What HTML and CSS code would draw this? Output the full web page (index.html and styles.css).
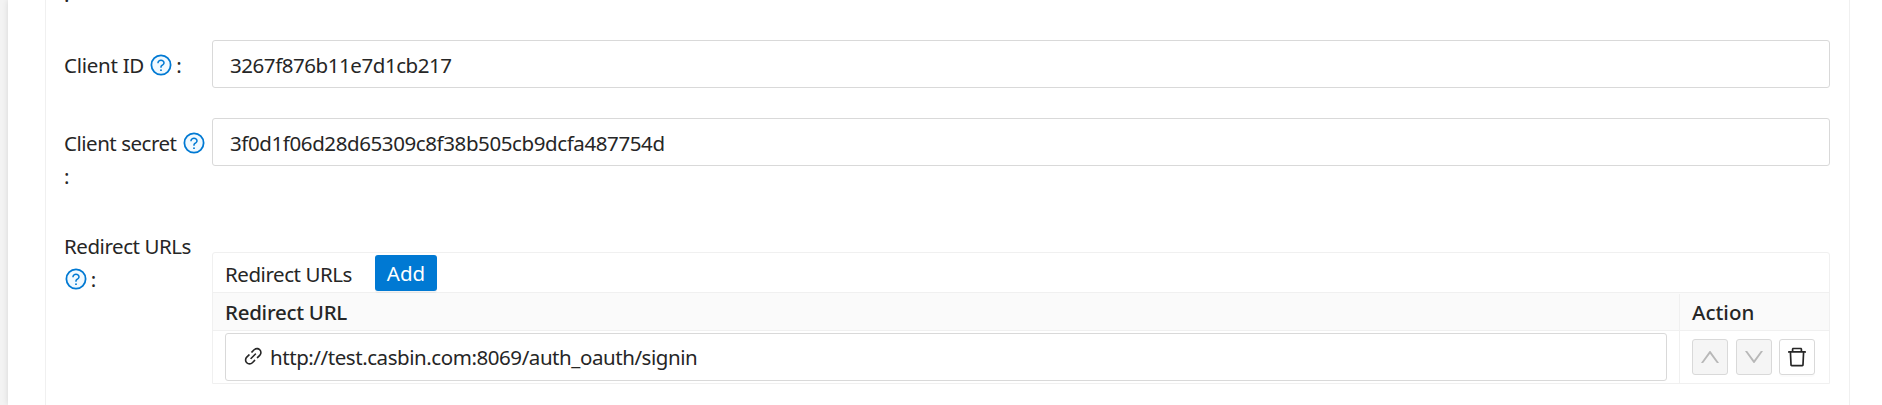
FILE: index.html
```
<!DOCTYPE html>
<html lang="en">
<head>
<meta charset="utf-8">
<title>Edit Application</title>
<link rel="stylesheet" href="styles.css">
</head>
<body>
<svg class="symbols" aria-hidden="true">
  <symbol id="help" viewBox="0 0 1024 1024">
    <circle cx="512" cy="512" r="410" fill="#f0f9ff" stroke="currentColor" stroke-width="76"/>
    <path fill="currentColor" d="M623.6 316.7C593.6 290.4 554 276 512 276s-81.6 14.5-111.6 40.7C369.2 344 352 380.7 352 420v7.6c0 4.4 3.6 8 8 8h48c4.4 0 8-3.6 8-8V420c0-44.1 43.1-80 96-80s96 35.9 96 80c0 31.1-22 59.6-56.1 72.7-21.2 8.1-39.2 22.3-52.1 40.9-13.1 19-19.9 41.8-19.9 64.9V620c0 4.4 3.6 8 8 8h48c4.4 0 8-3.6 8-8v-22.7a48.3 48.3 0 0130.9-44.8c59-22.7 97.1-74.7 97.1-132.5.1-39.3-17.1-76-48.3-103.3zM472 732a40 40 0 1080 0 40 40 0 10-80 0z"/>
  </symbol>
</svg>
<div class="page">
  <main class="card">
    <div class="row row-previous"><div class="label">:</div></div>
    <div class="row row-id">
      <div class="label"><span class="t-id">Client ID</span> <svg class="help"><use href="#help"/></svg> :</div>
      <div class="input"><span class="value">3267f876b11e7d1cb217</span></div>
    </div>
    <div class="row row-secret">
      <div class="label"><span class="t-secret">Client secret</span><svg class="help"><use href="#help"/></svg> <br>:</div>
      <div class="input"><span class="value v-secret">3f0d1f06d28d65309c8f38b505cb9dcfa487754d</span></div>
    </div>
    <div class="row row-urls">
      <div class="label"><span class="t-urls">Redirect URLs</span><br><svg class="help"><use href="#help"/></svg> :</div>
      <section class="table">
        <div class="title"><span class="t-urls">Redirect URLs</span><button class="add">Add</button></div>
        <div class="line head">
          <div class="cell"><span class="t-head">Redirect URL</span></div>
          <div class="cell action"><span class="t-action">Action</span></div>
        </div>
        <div class="line body">
          <div class="cell">
            <div class="input url">
              <svg class="link" viewBox="0 0 1024 1024"><path fill="currentColor" d="M574 665.4a8.03 8.03 0 00-11.3 0L446.5 781.6c-53.8 53.8-144.6 59.5-204 0-59.5-59.5-53.8-150.2 0-204l116.2-116.2c3.1-3.1 3.1-8.2 0-11.3l-39.8-39.8a8.03 8.03 0 00-11.3 0L191.4 526.5c-84.6 84.6-84.6 221.5 0 306s221.5 84.6 306 0l116.2-116.2c3.1-3.1 3.1-8.2 0-11.3L574 665.4zm258.6-474c-84.6-84.6-221.5-84.6-306 0L410.3 307.6a8.03 8.03 0 000 11.3l39.7 39.7c3.1 3.1 8.2 3.1 11.3 0l116.2-116.2c53.8-53.8 144.6-59.5 204 0 59.5 59.5 53.8 150.2 0 204L665.3 562.6a8.03 8.03 0 000 11.3l39.8 39.8c3.1 3.1 8.2 3.1 11.3 0l116.2-116.2c84.5-84.6 84.5-221.5 0-306.1zM610.1 372.3a8.03 8.03 0 00-11.3 0L372.3 598.7a8.03 8.03 0 000 11.3l39.6 39.6c3.1 3.1 8.2 3.1 11.3 0l226.4-226.4c3.1-3.1 3.1-8.2 0-11.3l-39.5-39.6z"/></svg>
              <span class="value">http://test.casbin.com:8069/auth_oauth/signin</span>
            </div>
          </div>
          <div class="cell action">
            <button class="tool disabled" aria-label="Up"><svg viewBox="0 0 1024 1024"><path fill="currentColor" d="M890.5 755.3L537.9 269.2c-12.8-17.6-39-17.6-51.7 0L133.5 755.3A8 8 0 00140 768h75c5.1 0 9.9-2.5 12.9-6.6L512 369.8l284.1 391.6c3 4.1 7.8 6.6 12.9 6.6h75c6.5 0 10.3-7.4 6.5-12.7z"/></svg></button>
            <button class="tool disabled down" aria-label="Down"><svg viewBox="0 0 1024 1024"><path fill="currentColor" d="M884 256h-75c-5.1 0-9.9 2.5-12.9 6.6L512 654.2 227.9 262.6c-3-4.1-7.8-6.6-12.9-6.6h-75c-6.5 0-10.3 7.4-6.5 12.7l352.6 486.1c12.8 17.6 39 17.6 51.7 0l352.6-486.1c3.9-5.3.1-12.7-6.4-12.7z"/></svg></button>
            <button class="tool delete" aria-label="Delete"><svg viewBox="0 0 1024 1024"><path fill="currentColor" d="M360 184h-8c4.4 0 8-3.6 8-8v8h304v-8c0 4.4 3.6 8 8 8h-8v72h72v-80c0-35.3-28.7-64-64-64H352c-35.3 0-64 28.7-64 64v80h72v-72zm504 72H160c-17.7 0-32 14.3-32 32v32c0 4.4 3.6 8 8 8h60.4l24.7 523c1.6 34.1 29.8 61 63.9 61h454c34.2 0 62.3-26.8 63.9-61l24.7-523H888c4.4 0 8-3.6 8-8v-32c0-17.7-14.3-32-32-32zM731.3 840H292.7l-24.2-512h487l-24.2 512z"/></svg></button>
          </div>
        </div>
      </section>
    </div>
  </main>
</div>
</body>
</html>
```
FILE: styles.css
```
* { box-sizing: border-box; }
body {
  margin: 0;
  height: 405px;
  overflow: hidden;
  background: #f3f3f3;
  color: #262626;
  font-family: "Noto Sans", "Open Sans", sans-serif;
  font-size: 20.5px;
  line-height: 33px;
}
.symbols { display: none; }
.page {
  height: 405px;
  margin-left: 8px;
  padding: 0 32px 0 37px;
  background: #fff;
  box-shadow: 0 0 6px rgba(0, 0, 0, .12);
}
.card {
  height: 405px;
  padding: 0 19px 0 18px;
  border: solid #f0f0f0;
  border-width: 0 1px;
}
.row {
  display: grid;
  grid-template-columns: 148px 1fr;
  align-items: start;
}
.label { white-space: nowrap; }
.row-previous { height: 40px; }
.row-previous .label { margin-top: -22px; }
.row-id { height: 78px; }
.row-secret { height: 103px; }
.row-id .label, .row-secret .label, .row-urls .label { padding-top: 9px; }
.t-id { letter-spacing: -.26px; }
.t-secret { letter-spacing: -.48px; }
.t-urls, .value { letter-spacing: -.44px; }
.v-secret { letter-spacing: -.4px; }
.t-head { letter-spacing: -.27px; }
.help {
  width: 24px;
  height: 24px;
  margin: 0 -2px 0 -.5px;
  color: #0079d3;
  vertical-align: -4px;
}
.row-secret .help { margin-left: 5.5px; }
.input {
  display: flex;
  align-items: center;
  height: 48px;
  padding: 2px 17px 0;
  border: 1px solid #d9d9d9;
  border-radius: 3px;
  background: #fff;
  white-space: nowrap;
}
.table {
  margin-top: 31px;
  border: 1px solid #f0f0f0;
  border-radius: 3px 3px 0 0;
}
.title {
  display: flex;
  align-items: center;
  height: 40px;
  padding-left: 12px;
  border-bottom: 1px solid #f0f0f0;
}
.title .t-urls { padding-top: 3px; }
.line { display: grid; grid-template-columns: 1fr 150px; }
.cell { display: flex; align-items: center; padding: 0 12px; }
.cell.action { padding-right: 0; }
.action { border-left: 1px solid #f0f0f0; }
.head {
  height: 38px;
  padding-top: 1px;
  border-bottom: 1px solid #f0f0f0;
  background: #fafafa;
  font-weight: 500;
}
.t-head, .t-action { padding-top: 1px; }
.body { height: 52px; }
.url { flex: 1; padding: 0 16px; }
.link { width: 22.5px; height: 22.5px; margin: 0 5.5px 1px 0; }
button {
  display: flex;
  align-items: center;
  justify-content: center;
  height: 36px;
  padding: 0;
  border-radius: 3px;
  font: inherit;
}
.add {
  width: 62px;
  margin-left: 23px;
  padding-top: 1px;
  border: 0;
  background: #0079d3;
  color: #fff;
  box-shadow: 0 2px 0 rgba(0, 0, 0, .045);
}
.tool {
  width: 36px;
  margin-right: 8px;
  border: 1px solid #d9d9d9;
  background: #fff;
  color: #262626;
}
.tool svg { width: 24px; height: 24px; }
.disabled { background: #f5f5f5; color: #b8b8b8; }
.down { margin-right: 7px; }
.delete { margin: 0; box-shadow: 0 2px 0 rgba(0, 0, 0, .016); }
```
